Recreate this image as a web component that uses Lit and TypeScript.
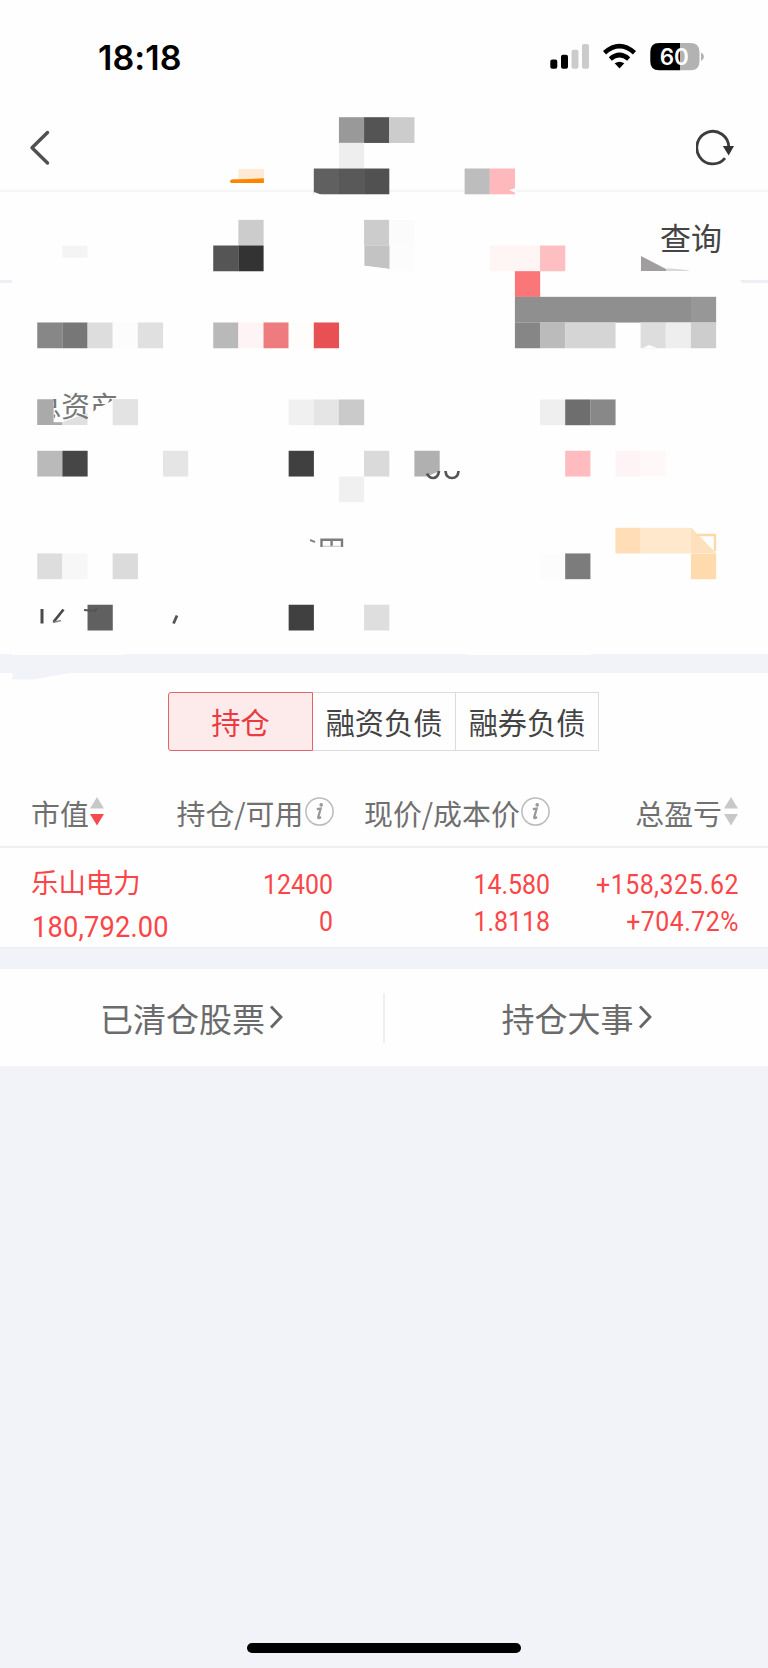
import { LitElement, html, css, svg } from "lit";
import { customElement } from "lit/decorators.js";

const CW = 25.14;
const CH = 25.66;
const cx = (k: number) => 37.25 + CW * k;
const cy = (j: number) => 117.2 + CH * j;

// [column, row, colour, columns spanned]
const cells: [number, number, string, number?][] = [
  [12, 0, "#999999"], [13, 0, "#545454"], [14, 0, "#cccccc"],
  [12, 1, "#eeeeee"],
  [11, 2, "#606060"], [12, 2, "#595959"], [13, 2, "#515151"],
  [17, 2, "#bdbdbd"], [18, 2, "#ffb8bb"],
  [8, 4, "#cccccc"], [13, 4, "#cccccc"], [14, 4, "#fbfbfb"],
  [7, 5, "#555555"], [8, 5, "#333333"], [14, 5, "#fcfcfc"],
  [18, 5, "#fff5f5", 2], [20, 5, "#fdbfc1"],
  [19, 6, "#fb7679"],
  [19, 7, "#8f8f8f", 7], [26, 7, "#979797"],
  [0, 8, "#878787"], [1, 8, "#777777"], [2, 8, "#dddddd"], [3, 8, "#fcfcfc"], [4, 8, "#e0e0e0"],
  [7, 8, "#b9b9b9"], [8, 8, "#fff4f5"], [9, 8, "#ee7b7d"], [10, 8, "#fffcfc"], [11, 8, "#e85153"],
  [19, 8, "#868686"], [20, 8, "#bbbbbb"], [21, 8, "#d5d5d5", 2], [24, 8, "#dddddd"], [25, 8, "#eeeeee"], [26, 8, "#cdcdcd"],
  [3, 11, "#e3e3e3"], [10, 11, "#f0f0f0"], [11, 11, "#e5e5e5"], [12, 11, "#cacaca"],
  [20, 11, "#efefef"], [21, 11, "#6e6e6e"], [22, 11, "#888888"],
  [0, 13, "#bababa"], [1, 13, "#464646"], [5, 13, "#e5e5e5"], [10, 13, "#404040"], [13, 13, "#dadada"],
  [21, 13, "#ffbbbd"], [23, 13, "#fff4f5"], [24, 13, "#fff8f8"],
  [12, 14, "#f0f0f0"],
  [23, 16, "#ffdeb7"], [24, 16, "#ffe8cc", 2],
  [0, 17, "#dddddd"], [1, 17, "#f7f7f7"], [3, 17, "#dbdbdb"], [20, 17, "#fcfcfc"], [21, 17, "#7c7c7c"], [26, 17, "#ffdaac"],
  [2, 19, "#606060"], [10, 19, "#404040"], [13, 19, "#dedede"],
];

@customElement("sort-mark")
class SortMark extends LitElement {
  static properties = { active: { type: Boolean } };
  declare active: boolean;
  static styles = css`:host{display:block;width:14px;height:29px;flex:none}svg{display:block}`;
  render() {
    return html`<svg width="14" height="29" viewBox="0 0 14 29">
      <path d="M7 0L14 11.5H0Z" fill="#c8c8c8"/>
      <path d="M0 17H14L7 28.5Z" fill=${this.active ? "#f54a4d" : "#c8c8c8"}/></svg>`;
  }
}

@customElement("info-mark")
class InfoMark extends LitElement {
  static styles = css`:host{display:block;width:29px;height:29px;flex:none}svg{display:block}`;
  render() {
    return html`<svg width="29" height="29" viewBox="0 0 29 29" fill="none">
      <circle cx="14.5" cy="14.5" r="13.6" stroke="#bbb" stroke-width="1.5"/>
      <circle cx="16.2" cy="7.9" r="1.8" fill="#999"/>
      <path d="M11.8 12.2L15.6 11.7L13.2 20.2Q13 22 16 20" stroke="#999" stroke-width="2.3"/></svg>`;
  }
}

@customElement("app-root")
export class AppRoot extends LitElement {
  static styles = css`
    :host { display: block; width: 768px; height: 1668px; background: #f2f3f8; overflow: hidden; position: relative;
      font-family: "Noto Sans CJK SC", sans-serif; color: #4a4a4a; }
    * { box-sizing: border-box; }
    svg { display: block; }
    .top { height: 655px; background: #fefefe; position: relative; }
    .mosaic { position: absolute; left: 0; top: 0; }
    .status { height: 96px; padding: 18px 64px 0 98px; display: flex; justify-content: space-between; align-items: center; }
    .time { font: 600 34px/40px Inter, sans-serif; color: #000; letter-spacing: 0.1px; padding-top: 1px; }
    .nav { height: 96px; border-bottom: 2px solid #f5f5f6; display: flex; justify-content: space-between; padding: 33px 32px 0 29px; }
    .tools { height: 91px; border-bottom: 3px solid #eeeef7; display: flex; justify-content: flex-end; padding: 22px 46px 0 0; }
    .query { font-size: 31px; line-height: 46px; color: #444; }
    .holdings { margin-top: 18px; height: 275px; background: #fefefe; border-bottom: 1px solid #ebebf0; }
    .tabs { width: 431px; height: 60px; margin: 0 0 0 168px; display: flex; font-size: 29.2px; line-height: 57px; text-align: center; color: #444; }
    .tabwrap { padding-top: 19px; height: 85px; }
    .tab { width: 143px; height: 59px; border: 1.5px solid #dcdcdc; border-left: 0; white-space: nowrap; }
    .tab.on { width: 145px; border: 1.5px solid #e26468; border-radius: 3px 0 0 3px; background: #fdeaeb; color: #e83c40; }
    .heads { height: 90px; border-bottom: 2px solid #efefef; display: flex; align-items: center; font-size: 28.9px; line-height: 40px; color: #707070; padding: 19px 30px 0 31px; }
    .h { display: flex; align-items: center; white-space: nowrap; }
    .h1 { width: 145.5px; } .h2 { width: 187.5px; }
    .h info-mark { margin: 0 0 0 1.5px; }
    .h sort-mark { margin: -1px 0 0 1px; }
    .last { flex: 1; justify-content: flex-end; }
    .last sort-mark { margin-left: 2px; }
    .row { height: 100px; display: grid; grid-template-columns: 175px 127px 217px 189px; padding: 16px 29px 0 31px; color: #fb4548; }
    .name { font-size: 27.4px; line-height: 40px; margin-top: -3px; }
    .num { font-family: Roboto, sans-serif; font-size: 27.2px; line-height: 37.5px; padding-top: 2.5px; text-align: right; white-space: nowrap; transform: scaleX(.915); transform-origin: 100% 50%; }
    .pl { letter-spacing: 0.55px; }
    .big { font-family: Roboto, sans-serif; font-size: 29.6px; line-height: 44px; letter-spacing: 0.2px; transform: scaleX(.92); transform-origin: 0 50%; margin: 4px 0 0 1px; }
    .links { margin-top: 21px; height: 97px; background: #fefefe; display: flex; align-items: center; }
    .link { width: 383px; display: flex; justify-content: center; align-items: center; font-size: 33px; line-height: 48px; color: #6b6b6b; }
    .link svg { margin: -1px 0 0 4px; }
    .bar { width: 2px; height: 50px; background: #eeeef7; flex: none; }
    .bar.edge { width: 1px; }
    .home { position: absolute; left: 247px; bottom: 15px; width: 274px; height: 10px; border-radius: 5px; background: #000; }
  `;

  mosaic() {
    return svg`
      <path d="M12 277H738L743 284H12Z" fill="#fefefe"/>
      <rect x="62.4" y="245.7" width="25.1" height="12" fill="#f4f4f4"/>
      ${cells.map(([k, j, c, n = 1]) => svg`<rect x=${cx(k)} y=${cy(j)} width=${CW * n + 0.1} height=${CH + 0.1} fill=${c}/>`)}
      <path d="M364.4 245.5H389.5V269L364.4 265.7Z" fill="#c3c3c3"/>
      <path d="M364.4 265.7L389.5 269V272H364Z" fill="#fefefe"/>
      <rect x="238.5" y="169" width="25.5" height="10" fill="#ffead6"/>
      <path d="M230.5 180.7Q231 179.5 236 179.5L263.8 178.3V183L231 183Z" fill="#ff8500"/>
      <path d="M232 181.3H262" stroke="#ff8500" stroke-width="3.6" stroke-linecap="round"/>
      <path d="M314 192L322 195H314ZM516 188L509 190L516 193Z" fill="#fefefe"/>
      <path d="M641 256L666 269L690 271H641Z" fill="#a09e9f"/>
      <path d="M666 268.5Q680 268 690 271H666Z" fill="#d8d8d8"/>
      <path d="M643 348L649 345L657 348Z" fill="#fefefe"/>
      <path d="M62.4 425V422L87.5 413V425Z" fill="#e0e0e0"/>
      <text x="32.5" y="416.5" font-size="28.8" fill="#777">总资产</text>
      <path d="M30 385H60V396H53L54 421L63 422.3V427H30Z" fill="#fefefe"/>
      <path d="M37.2 399.3H53.6V422.3H62.4V425H37.2Z" fill="#aaa"/>
      <path d="M89 425L92 412.5L98 408L106 404L119 397V425Z" fill="#fefefe"/>
      <rect x="112.7" y="399.1" width="25.2" height="25.8" fill="#e3e3e3"/>
      <path d="M414.4 450.8H439.7V471L427 476.5H414.4Z" fill="#b0b0b0"/>
      <path d="M427 473.5Q429 478 433 478Q438 478 439 471M445.5 471Q446 478 452 478Q458 478 458.5 471" fill="none" stroke="#555" stroke-width="2.7"/>
      <path d="M310 540L315 542" stroke="#888" stroke-width="2"/>
      <path d="M321.5 547V539.7H342V547M331.6 540V547" fill="none" stroke="#7c7c7c" stroke-width="2.4"/>
      <path d="M323 546.3H341" stroke="#ccc" stroke-width="1.2"/>
      <path d="M691 527.5L716 553H691Z" fill="#ffe0bc"/>
      <path d="M697 535H715V551" fill="none" stroke="#ffd9a8" stroke-width="2.4"/>
      <path d="M42 609V623.5" stroke="#4a4a4a" stroke-width="3"/>
      <path d="M63.5 609.5L53.5 622" fill="none" stroke="#4a4a4a" stroke-width="2.8"/>
      <path d="M53 622.5L61 620.5" stroke="#888" stroke-width="1.5"/>
      <path d="M84 610L95 611L97 608" fill="none" stroke="#555" stroke-width="2"/>
      <path d="M177 615.5L173.5 623.5" stroke="#555" stroke-width="2.8"/>
      <path d="M0 654H12V656H118Q124 654 128 654H465Q475 656 500 656H588L592 654H768V673H70L33 679.5H12.5V673H0Z" fill="#f2f3f8"/>
    `;
  }

  render() {
    const chev = html`<svg width="14" height="24" viewBox="0 0 14 24"><path d="M2 1.5L12 12L2 22.5" fill="none" stroke="#666" stroke-width="2.8"/></svg>`;
    return html`
      <div class="top">
        <div class="status">
          <div class="time">18:18</div>
          <svg width="156" height="30" viewBox="548 42 156 30">
            <rect x="550.3" y="59.5" width="7" height="9.3" rx="2"/><rect x="561" y="54.7" width="7" height="14.1" rx="2"/>
            <rect x="571.5" y="49.7" width="7" height="19.1" rx="2" fill="#cbcbcb"/><rect x="582" y="44" width="7" height="24.8" rx="2" fill="#cbcbcb"/>
            <path d="M604.5 52.8Q619.5 39.5 634.5 52.8M610.3 59Q619.5 51 628.7 59" fill="none" stroke="#000" stroke-width="4.6"/>
            <path d="M614.7 63.3Q619.5 60 624.3 63.3L619.5 68.6Z"/>
            <path d="M659 43H680.3V70.3H659Q650.3 70.3 650.3 61.5V52Q650.3 43 659 43Z"/>
            <path d="M680.3 43H690.5Q699.5 43 699.5 52V61.5Q699.5 70.3 690.5 70.3H680.3Z" fill="#b2b2b2"/>
            <path d="M701 52.5Q704 54 704 56.7Q704 59.5 701 61Z" fill="#b2b2b2"/>
            <text x="674.3" y="64.9" text-anchor="middle" font-family="Inter" font-weight="600" font-size="22.5" fill="#fff">60</text>
          </svg>
        </div>
        <div class="nav">
          <svg width="22" height="38" viewBox="0 0 22 38"><path d="M18.5 3.5L3 18.8L18.5 34" fill="none" stroke="#505050" stroke-width="3.4" stroke-linecap="round" stroke-linejoin="round"/></svg>
          <svg width="40" height="38" viewBox="696 129 40 38"><path d="M728.8 147A16 16.3 0 1 0 725 158.2" fill="none" stroke="#3c3c3c" stroke-width="2.8"/><path d="M722.8 146L734 146L728.7 155.5Z" fill="#333"/></svg>
        </div>
        <div class="tools"><div class="query">查询</div></div>
        <svg class="mosaic" width="768" height="681" viewBox="0 0 768 681">${this.mosaic()}</svg>
      </div>
      <div class="holdings">
        <div class="tabwrap"><div class="tabs"><div class="tab on">持仓</div><div class="tab">融资负债</div><div class="tab">融券负债</div></div></div>
        <div class="heads">
          <div class="h h1"><span>市值</span><sort-mark active></sort-mark></div>
          <div class="h h2"><span>持仓/可用</span><info-mark></info-mark></div>
          <div class="h"><span>现价/成本价</span><info-mark></info-mark></div>
          <div class="h last"><span>总盈亏</span><sort-mark></sort-mark></div>
        </div>
        <div class="row">
          <div><div class="name">乐山电力</div><div class="big">180,792.00</div></div>
          <div class="num">12400<br>0</div>
          <div class="num">14.580<br>1.8118</div>
          <div class="num pl">+158,325.62<br>+704.72%</div>
        </div>
      </div>
      <div class="links">
        <div class="link">已清仓股票${chev}</div><div class="bar"></div><div class="link">持仓大事${chev}</div>
      </div>
      <div class="home"></div>
    `;
  }
}
